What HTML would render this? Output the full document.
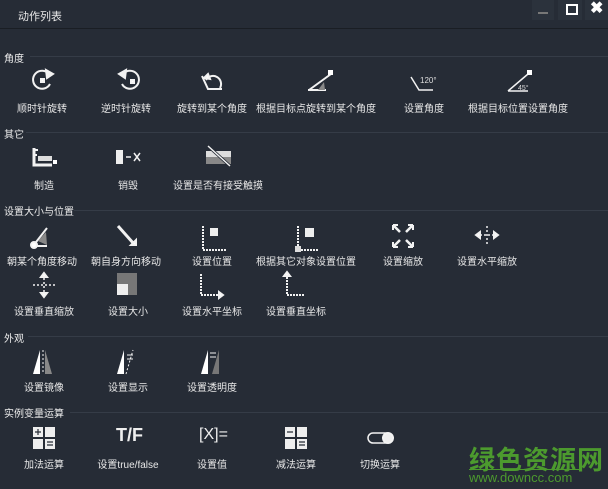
<!DOCTYPE html><html><head><meta charset="utf-8"><style>
body{margin:0;width:608px;height:489px;background:#262c36;overflow:hidden;position:relative;font-family:"Liberation Sans","Noto Sans CJK SC",sans-serif;color:#e8e8e8}
.t{position:absolute;font-size:10px;white-space:nowrap;transform:translateX(-50%)}
.s{position:absolute;left:4px;font-size:10px;color:#eee}
.ln{position:absolute;height:1px;background:#353c47;right:0}
svg{position:absolute}
</style></head><body>
<div style="position:absolute;left:0;top:0;width:608px;height:28px;background:#262c36;border-bottom:1px solid #1a1e24"></div>
<div style="position:absolute;left:18px;top:8px;font-size:11px">动作列表</div>
<div style="position:absolute;left:532px;top:0;width:22px;height:20px;background:#2b323c"></div>
<div style="position:absolute;left:538px;top:12px;width:10px;height:2px;background:#777"></div>
<div style="position:absolute;left:558px;top:0;width:24px;height:20px;background:#2b323c"></div>
<div style="position:absolute;left:566px;top:4px;width:8px;height:7px;border:2px solid #fff"></div>
<div style="position:absolute;left:585px;top:0;width:23px;height:20px;background:#2b323c"></div>
<div style="position:absolute;left:590px;top:-2px;font-size:16px;font-weight:bold;color:#fff">✖</div>

<div class="s" style="top:50px">角度</div><div class="ln" style="left:30px;top:56px"></div>
<div class="s" style="top:126px">其它</div><div class="ln" style="left:26px;top:132px"></div>
<div class="s" style="top:203px">设置大小与位置</div><div class="ln" style="left:74px;top:210px"></div>
<div class="s" style="top:330px">外观</div><div class="ln" style="left:28px;top:336px"></div>
<div class="s" style="top:405px">实例变量运算</div><div class="ln" style="left:70px;top:412px"></div>

<svg width="608" height="489" style="left:0;top:0" fill="none" stroke="#f2f2f2" stroke-width="2">
<path d="M49 74a9 9 0 1 0 1 10"/><path d="M46 70l7 4-6 4z" fill="#f2f2f2"/><rect x="41" y="79" width="3" height="3" fill="#fff"/>
<path d="M123 74a9 9 0 1 1-1 10"/><path d="M126 70l-7 4 6 4z" fill="#f2f2f2"/><rect x="131" y="80" width="3" height="3" fill="#fff"/>
<path d="M202 76l6 13h14M206 80a8 8 0 0 1 14 8"/><path d="M204 78l4-4 2 5z" fill="#fff"/>
<path d="M309 90l22-16M308 90h18"/><rect x="328" y="70" width="5" height="5" fill="#fff" stroke="none"/><path d="M318 90l6-8 1 8z" fill="#888" stroke="none"/>
<path d="M411 77l8 13h14" stroke-width="1.5"/><text x="420" y="83" font-size="8" fill="#ddd" stroke="none">120°</text>
<path d="M508 91l20-17M508 91h20" stroke-width="1.5"/><rect x="527" y="70" width="5" height="5" fill="#fff" stroke="none"/><text x="518" y="90" font-size="7" fill="#ddd" stroke="none">45°</text>
<path d="M34 148v17h18" stroke-width="3"/><rect x="38" y="156" width="14" height="5" fill="#ddd" stroke="none"/><rect x="53" y="160" width="4" height="4" fill="#fff" stroke="none"/><path d="M34 150h4M34 155h3" stroke-width="2"/>
<rect x="116" y="150" width="7" height="14" fill="#eee" stroke="none"/><path d="M126 157h5M134 153l6 8M140 153l-6 8" stroke-width="1.5"/>
<rect x="206" y="151" width="25" height="13" fill="#888" stroke="none"/><rect x="206" y="151" width="25" height="6" fill="#ddd" stroke="none"/><path d="M208 146l22 20" stroke="#262c36" stroke-width="3"/><path d="M208 146l22 20" stroke-width="1.5"/>
<path d="M33 246l14-18M33 246h14"/><circle cx="34" cy="245" r="3" fill="#fff"/><path d="M38 241l8-9 1 13z" fill="#888" stroke="none"/>
<path d="M118 226l16 18" stroke-width="3"/><path d="M131 245l5 0 0-5z" fill="#fff"/>
<path d="M203 226v24h24" stroke-dasharray="2 1"/><rect x="210" y="228" width="8" height="8" fill="#eee" stroke="none"/>
<path d="M298 226v24h20" stroke-dasharray="2 1"/><rect x="305" y="228" width="9" height="9" fill="#eee" stroke="none"/><rect x="295" y="246" width="6" height="6" fill="#ddd" stroke="none"/>
<path d="M394 226l6 6M412 226l-6 6M394 246l6-6M412 246l-6-6" stroke-width="2.5"/><path d="M393 225h5M393 225v5M413 225h-5M413 225v5M393 247h5M393 247v-5M413 247h-5M413 247v-5" stroke-width="2"/>
<path d="M476 235h22M487 226v20" stroke-width="1.5" stroke-dasharray="2 2"/><path d="M476 235l4-3v6zM498 235l-4-3v6z" fill="#fff"/>
<path d="M33 285h22M44 274v22" stroke-width="1.5" stroke-dasharray="2 2"/><path d="M44 273l-3 4h6zM44 297l-3-4h6z" fill="#fff"/>
<rect x="117" y="273" width="20" height="22" fill="#777" stroke="none"/><rect x="117" y="284" width="11" height="11" fill="#eee" stroke="none"/>
<path d="M201 274v21h20" stroke-dasharray="2 1"/><path d="M219 292l4 3-4 3z" fill="#fff"/>
<path d="M287 274v21h17" stroke-dasharray="2 1"/><path d="M284 276l3-4 3 4z" fill="#fff"/>
<path d="M33 374l7-24v24z" fill="#fff" stroke="none"/><path d="M52 374l-7-24v24z" fill="#888" stroke="none"/><path d="M43 350v24" stroke-width="1" stroke-dasharray="2 2"/>
<path d="M117 374l7-24v24z" fill="#fff" stroke="none"/><path d="M126 374l7-24" stroke-width="1" stroke-dasharray="2 2"/><path d="M127 355h6M133 359h-6" stroke-width="1"/>
<path d="M201 374l7-24v24z" fill="#fff" stroke="none"/><path d="M212 374l7-24v24z" fill="#777" stroke="none"/><path d="M210 353h6M216 357h-6" stroke-width="1"/>
<rect x="33" y="427" width="10" height="10" fill="#eee" stroke="none"/><rect x="45" y="427" width="10" height="10" fill="#eee" stroke="none"/><rect x="33" y="439" width="10" height="10" fill="#eee" stroke="none"/><rect x="45" y="439" width="10" height="10" fill="#eee" stroke="none"/>
<path d="M35 432h6M38 429v6M47 442h6M47 445h6" stroke="#262c36" stroke-width="1.2"/>
<rect x="285" y="427" width="10" height="10" fill="#eee" stroke="none"/><rect x="297" y="427" width="10" height="10" fill="#eee" stroke="none"/><rect x="285" y="439" width="10" height="10" fill="#eee" stroke="none"/><rect x="297" y="439" width="10" height="10" fill="#eee" stroke="none"/>
<path d="M287 432h6M299 442h6M299 445h6" stroke="#262c36" stroke-width="1.2"/>
<rect x="368" y="433" width="24" height="10" rx="5" stroke-width="1.5"/><circle cx="388" cy="438" r="5" fill="#eee"/>
</svg>
<div style="position:absolute;left:116px;top:425px;font-size:18px;font-weight:bold;color:#eee">T/F</div>
<div style="position:absolute;left:199px;top:426px;font-size:16px;color:#eee">[X]=</div>

<div class="t" style="left:42px;top:100px">顺时针旋转</div><div class="t" style="left:126px;top:100px">逆时针旋转</div><div class="t" style="left:212px;top:100px">旋转到某个角度</div><div class="t" style="left:316px;top:100px">根据目标点旋转到某个角度</div><div class="t" style="left:424px;top:100px">设置角度</div><div class="t" style="left:518px;top:100px">根据目标位置设置角度</div>
<div class="t" style="left:44px;top:177px">制造</div><div class="t" style="left:128px;top:177px">销毁</div><div class="t" style="left:218px;top:177px">设置是否有接受触摸</div>
<div class="t" style="left:42px;top:253px">朝某个角度移动</div><div class="t" style="left:126px;top:253px">朝自身方向移动</div><div class="t" style="left:212px;top:253px">设置位置</div><div class="t" style="left:306px;top:253px">根据其它对象设置位置</div><div class="t" style="left:403px;top:253px">设置缩放</div><div class="t" style="left:487px;top:253px">设置水平缩放</div>
<div class="t" style="left:44px;top:303px">设置垂直缩放</div><div class="t" style="left:128px;top:303px">设置大小</div><div class="t" style="left:212px;top:303px">设置水平坐标</div><div class="t" style="left:296px;top:303px">设置垂直坐标</div>
<div class="t" style="left:44px;top:379px">设置镜像</div><div class="t" style="left:128px;top:379px">设置显示</div><div class="t" style="left:212px;top:379px">设置透明度</div>
<div class="t" style="left:44px;top:456px">加法运算</div><div class="t" style="left:128px;top:456px">设置true/false</div><div class="t" style="left:212px;top:456px">设置值</div><div class="t" style="left:296px;top:456px">减法运算</div><div class="t" style="left:380px;top:456px">切换运算</div>
<div style="position:absolute;left:469px;top:440px;font-size:26px;font-weight:bold;color:#4c9a2e;letter-spacing:1px">绿色资源网</div>
<div style="position:absolute;left:469px;top:469px;width:110px;border-top:1px solid #4c9a2e;font-size:13px;color:#4c9a2e">www.downcc.com</div>
</body></html>
